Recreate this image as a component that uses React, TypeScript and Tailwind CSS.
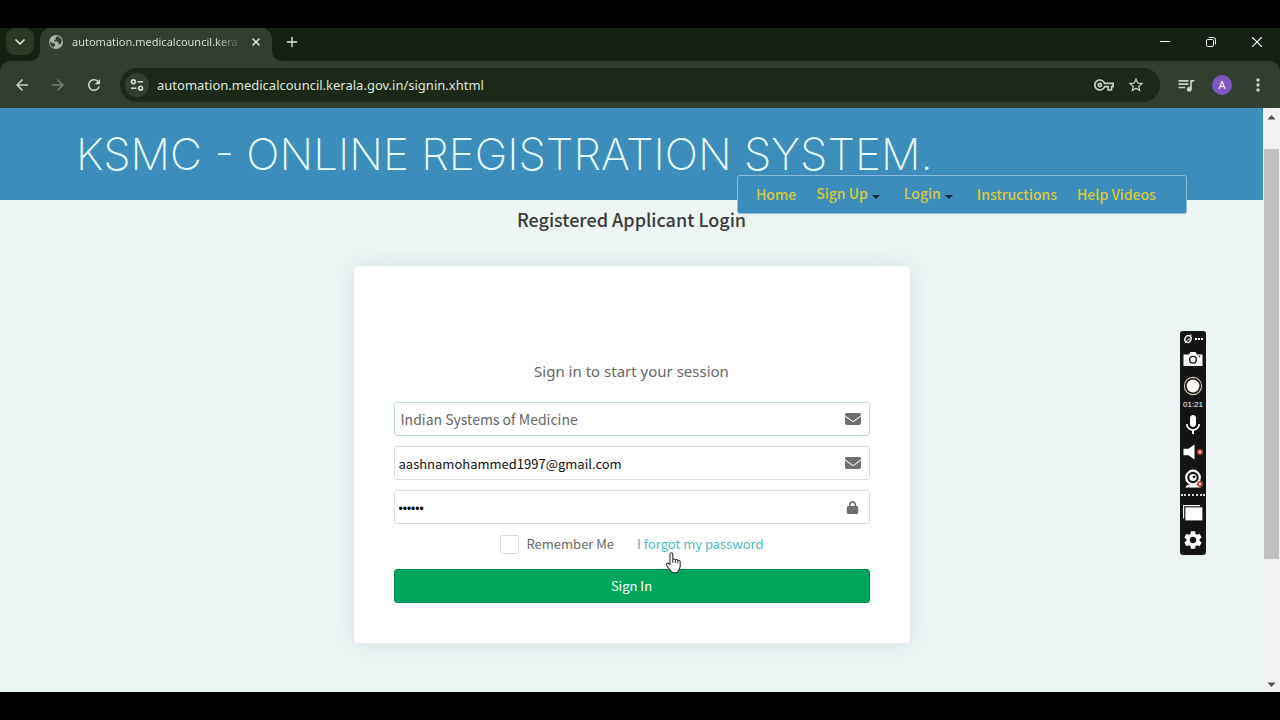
import { ReactNode } from "react";
import { ChevronDown, Plus, X } from "lucide-react";
import {
  MdArrowBack,
  MdArrowForward,
  MdMic,
  MdMoreVert,
  MdOutlineVpnKey,
  MdQueueMusic,
  MdRefresh,
  MdSettings,
  MdStarBorder,
} from "react-icons/md";
import { FaEnvelope, FaLock } from "react-icons/fa6";

function GlobeIcon() {
  return (
    <svg viewBox="0 0 16 16" className="h-4 w-4 shrink-0" aria-hidden="true">
      <circle cx="8" cy="8" r="7" fill="#a9b4ab" />
      <path
        d="M9 2.2 7.6 3.6 8 5 6.4 6.2 6 7.6H9.4l1 1.2.2 1.6 1.6-.2 1.2-1.6.4-2A6 6 0 0 0 9 2.2ZM2.2 7.4l3 2.2h1.6l.4 1.6-1.2 1 .2 1.4A6 6 0 0 1 2.2 7.4Z"
        fill="#35422f"
      />
    </svg>
  );
}

function SiteSettingsIcon() {
  return (
    <svg viewBox="0 0 16 16" className="h-4 w-4" fill="none" stroke="#d3dccf" strokeWidth="1.6" aria-hidden="true">
      <circle cx="4.4" cy="4.8" r="1.9" />
      <path d="M8.4 4.8H14M2 11.2h5.4" />
      <circle cx="11.6" cy="11.2" r="1.9" />
    </svg>
  );
}

function TabStrip() {
  return (
    <div className="flex h-[33px] bg-[#323f2e] text-[#dfe8dc]">
      <div className="flex w-10 justify-center rounded-br-[10px] bg-[#152211]">
        <button aria-label="Search tabs" className="flex h-[27px] w-7 items-center justify-center rounded-[9px] bg-[#2a3826]">
          <ChevronDown className="h-4 w-4" strokeWidth={2.5} />
        </button>
      </div>
      <div className="bg-[#152211]">
        <div className="flex h-full w-[232px] items-center gap-2 rounded-t-[10px] bg-[#323f2e] px-2 pb-[5px]">
          <GlobeIcon />
          <span className="flex-1 whitespace-nowrap bg-linear-to-r from-[#dfe8dc] from-85% to-[#4a5646] bg-clip-text text-[11px] leading-4 text-transparent">
            automation.medicalcouncil.kera
          </span>
          <button aria-label="Close tab" className="flex w-4 justify-center">
            <X className="h-3 w-3" strokeWidth={3} />
          </button>
        </div>
      </div>
      <div className="flex flex-1 rounded-bl-[10px] bg-[#152211]">
        <button aria-label="New tab" className="flex w-10 items-center justify-center pb-[5px]">
          <Plus className="h-4 w-4" />
        </button>
        <div className="ml-auto flex w-[138px] items-center justify-around pb-[6px] text-white">
          <button aria-label="Minimize" className="flex w-8 justify-center">
            <svg viewBox="0 0 10 10" className="h-[10px] w-[10px]" stroke="currentColor">
              <path d="M0 4.5h10" />
            </svg>
          </button>
          <button aria-label="Restore" className="flex w-8 justify-center">
            <svg viewBox="0 0 10 10" className="h-[10px] w-[10px]" fill="none" stroke="currentColor">
              <rect x=".5" y="2.5" width="7" height="7" rx="1.2" />
              <path d="M2.7.6H7.5a2 2 0 0 1 2 2V7.4" />
            </svg>
          </button>
          <button aria-label="Close window" className="flex w-8 justify-center">
            <svg viewBox="0 0 10 10" className="h-[10px] w-[10px]" stroke="currentColor" strokeWidth="1.2">
              <path d="M0 0l10 10M10 0L0 10" />
            </svg>
          </button>
        </div>
      </div>
    </div>
  );
}

function Toolbar() {
  return (
    <div className="bg-[#152211]">
      <div className="flex h-[47px] items-center rounded-t-[10px] bg-[#323f2e] pl-1 text-[#c9d5c4]">
        <button aria-label="Back" className="flex w-9 justify-center">
          <MdArrowBack className="h-[18px] w-[18px]" />
        </button>
        <button aria-label="Forward" className="flex w-9 justify-center text-[#75806f]">
          <MdArrowForward className="h-[18px] w-[18px]" />
        </button>
        <button aria-label="Reload" className="flex w-9 justify-center">
          <MdRefresh className="h-[18px] w-[18px]" />
        </button>
        <div className="ml-2 flex h-[34px] flex-1 items-center rounded-full bg-[#1c2818] pl-[5px] pr-2">
          <button aria-label="Site information" className="flex h-6 w-6 items-center justify-center rounded-full bg-[#323f2e]">
            <SiteSettingsIcon />
          </button>
          <input
            aria-label="Address"
            defaultValue="automation.medicalcouncil.kerala.gov.in/signin.xhtml"
            className="ml-2 min-w-0 flex-1 bg-transparent text-[13px] leading-5 text-[#dfe8dc] outline-none"
          />
          <button aria-label="Passwords" className="flex w-8 justify-center">
            <MdOutlineVpnKey className="h-5 w-5" />
          </button>
          <button aria-label="Bookmark this page" className="flex w-8 justify-center">
            <MdStarBorder className="h-[18px] w-[18px]" />
          </button>
        </div>
        <button aria-label="Media controls" className="ml-2 flex w-9 justify-center">
          <MdQueueMusic className="h-5 w-5" />
        </button>
        <button aria-label="Profile" className="mx-2 h-5 w-5 rounded-full bg-[#7e57c2] text-[11px] leading-5 text-white">
          A
        </button>
        <button aria-label="Menu" className="ml-2 mr-3 flex w-5 justify-center">
          <MdMoreVert className="h-5 w-5" />
        </button>
      </div>
    </div>
  );
}

function Caret() {
  return (
    <svg viewBox="0 0 8 4" className="mt-2 h-1 w-2" fill="#10243a" aria-hidden="true">
      <path d="M0 0h8L4 4z" />
    </svg>
  );
}

function SiteNav() {
  return (
    <nav className="absolute right-[76px] top-[67px] flex h-[39px] w-[450px] items-center whitespace-nowrap rounded-[3px] border border-[#8cbcdc] bg-[#3c8dbc] pb-[2px] pl-[18px] text-sm font-medium leading-5 text-[#d9c83c]">
      <a href="#home">Home</a>
      <a href="#signup" className="ml-5 flex items-center gap-1 pb-[2px]">
        Sign Up <Caret />
      </a>
      <a href="#login" className="ml-6 flex items-center gap-1 pb-[2px]">
        Login <Caret />
      </a>
      <a href="#instructions" className="ml-6">Instructions</a>
      <a href="#videos" className="ml-5">Help Videos</a>
    </nav>
  );
}

function Field({ icon, active, children }: { icon: ReactNode; active?: boolean; children: ReactNode }) {
  return (
    <div
      className={`flex h-[34px] items-center rounded-[3px] border bg-white pr-2 ${
        active ? "border-[#bdd8e0]" : "border-[#dcdde0]"
      }`}
    >
      {children}
      <span className="flex w-4 justify-center text-[#6f6f6f]">{icon}</span>
    </div>
  );
}

function HandCursor() {
  return (
    <svg viewBox="0 0 17 22" className="absolute left-[165px] top-[18px] h-[22px] w-[17px]" aria-hidden="true">
      <path
        d="M5 12.5V2.2C5 .3 7.8.3 7.8 2.2V7.6c.3-1 2.4-.9 2.6.5.5-.9 2.3-.7 2.5.6.6-.7 2.3-.4 2.3 1V14c0 2-1.3 3-1.5 4.4-.3 1.6-1.6 2.4-3.7 2.4-2.8 0-3.8-.8-4.8-2.6-.9-1.7-2.3-2.6-3.4-4.6C.4 11.8 2.2 10.6 3.4 11.6Z"
        fill="#fff"
        stroke="#333"
        strokeWidth="1.1"
        strokeLinejoin="round"
      />
      <path d="M7.8 7.6V11M10.4 8.1V11M12.9 8.8V11.4" stroke="#333" strokeWidth="1" />
    </svg>
  );
}

function LoginCard() {
  return (
    <form className="mx-auto mt-[35px] w-[556px] rounded-[3px] bg-white px-10 pb-10 pt-[95px] shadow-[0_0_30px_rgba(0,60,60,0.09)]">
      <p className="text-center font-['Noto_Sans','Open_Sans',sans-serif] text-[15px] leading-5 text-[#666]">
        Sign in to start your session
      </p>
      <div className="mt-[21px] flex flex-col gap-[10px]">
        <Field active icon={<FaEnvelope className="h-4 w-4" />}>
          <select
            aria-label="Council"
            className="h-full min-w-0 flex-1 appearance-none bg-transparent pl-[6px] text-sm text-[#666] outline-none"
          >
            <option>Indian Systems of Medicine</option>
          </select>
        </Field>
        <Field icon={<FaEnvelope className="h-4 w-4" />}>
          <input
            type="email"
            aria-label="Email"
            defaultValue="aashnamohammed1997@gmail.com"
            className="h-full min-w-0 flex-1 bg-transparent pl-1 text-[13px] text-[#111] outline-none"
          />
        </Field>
        <Field icon={<FaLock className="h-[13px] w-[13px]" />}>
          <input
            type="password"
            aria-label="Password"
            defaultValue="123456"
            className="h-full min-w-0 flex-1 bg-transparent pl-1 pt-[3px] font-['Liberation_Sans',sans-serif] text-xs text-black outline-none"
          />
        </Field>
      </div>
      <div className="relative mx-auto mt-[10px] flex h-5 w-[264px] items-center whitespace-nowrap text-[13px] leading-5">
        <label className="flex items-center gap-2 text-[#666]">
          <input type="checkbox" className="h-[19px] w-[19px] appearance-none rounded-[2px] border border-[#d9d9dc] bg-white" />
          Remember Me
        </label>
        <a href="#forgot" className="ml-auto text-[#4cbcb6]">
          I forgot my password
        </a>
        <HandCursor />
      </div>
      <button
        type="submit"
        className="mt-[15px] h-[34px] w-full rounded-[3px] border border-[#008d4c] bg-[#00a65a] text-[13px] text-white"
      >
        Sign In
      </button>
    </form>
  );
}

function MuteBadge() {
  return (
    <g>
      <circle cx="17" cy="15" r="3" fill="#c9403c" />
      <path d="M15.8 13.8l2.4 2.4M18.2 13.8l-2.4 2.4" stroke="#fff" strokeWidth=".9" />
    </g>
  );
}

function RecorderPanel() {
  return (
    <div className="absolute right-[57px] top-[223px] flex h-[224px] w-[26px] flex-col items-center rounded-[3px] bg-[#141414] text-white">
      <svg viewBox="0 0 26 16" className="h-4 w-[26px]" fill="none" stroke="#fff">
        <ellipse cx="8" cy="8" rx="3" ry="3.4" strokeWidth="1.4" transform="rotate(25 8 8)" />
        <path d="M5 12.2 8 8.4 10 8M9 4.5 11.5 4" strokeWidth="1" />
        <path d="M15 8h8" strokeWidth="1.8" strokeDasharray="2 1" />
      </svg>
      <button aria-label="Screenshot" className="flex h-6 items-center">
        <svg viewBox="0 0 20 16" className="h-4 w-5">
          <path d="M.5 3.5H6L7.5 1h5L14 3.5h5.5V15H.5z" fill="#fff" />
          <circle cx="10" cy="8.8" r="3.4" fill="#fff" stroke="#141414" strokeWidth="1.3" />
          <circle cx="16.6" cy="5.4" r=".8" fill="#141414" />
        </svg>
      </button>
      <button aria-label="Record" className="flex h-[30px] items-center">
        <svg viewBox="0 0 20 20" className="h-5 w-5">
          <circle cx="10" cy="10" r="8.6" fill="none" stroke="#d9c9b8" strokeWidth="1.1" />
          <circle cx="10" cy="10" r="6.4" fill="#fffdf5" />
        </svg>
      </button>
      <span className="font-['Liberation_Sans',sans-serif] text-[8px] leading-[8px]">01:21</span>
      <button aria-label="Microphone" className="mt-[2px] flex h-7 items-center">
        <MdMic className="h-6 w-6" />
      </button>
      <button aria-label="Speaker" className="flex h-[26px] items-center">
        <svg viewBox="0 0 22 18" className="h-[18px] w-[22px]">
          <path d="M1.5 5.8h5L12.5 1.5v15L6.5 12.2h-5z" fill="#fff" />
          <g transform="translate(1 -6)">
            <MuteBadge />
          </g>
        </svg>
      </button>
      <button aria-label="Webcam" className="flex h-7 items-center">
        <svg viewBox="0 0 20 20" className="h-5 w-5">
          <circle cx="10" cy="8.5" r="6.8" fill="none" stroke="#fff" strokeWidth="2.2" />
          <circle cx="10" cy="8.5" r="3.6" fill="#fff" />
          <circle cx="11" cy="7.8" r="1.4" fill="#141414" />
          <path d="M3.5 17.8C5 15.4 15 15.4 16.5 17.8Z" stroke="#fff" strokeWidth="1.4" fill="none" />
          <MuteBadge />
        </svg>
      </button>
      <div className="mt-[1px] w-6 border-t-2 border-dotted border-[#ddd]" />
      <button aria-label="Windows" className="mt-[3px] flex h-7 items-center">
        <svg viewBox="0 0 20 16" className="h-4 w-5">
          <path d="M.6 13.4V.6H17" fill="none" stroke="#fff" strokeWidth="1.2" />
          <rect x="2.4" y="2.4" width="17" height="13" fill="#fff" />
        </svg>
      </button>
      <button aria-label="Settings" className="flex h-[26px] items-center">
        <MdSettings className="h-[22px] w-[22px]" />
      </button>
    </div>
  );
}

function ScrollRail() {
  return (
    <div className="flex w-[17px] flex-col items-center bg-[#f1f1f1]" aria-hidden="true">
      <svg viewBox="0 0 17 17" className="h-[17px] w-[17px]" fill="#505050">
        <path d="M8.5 7 12.5 11.5h-8z" />
      </svg>
      <div className="flex w-full flex-1 flex-col items-center pb-[116px] pt-6">
        <div className="w-[15px] flex-1 bg-[#c1c1c1]" />
      </div>
      <svg viewBox="0 0 17 17" className="h-[17px] w-[17px]" fill="#505050">
        <path d="M8.5 12 4.5 7.5h8z" />
      </svg>
    </div>
  );
}

export default function App() {
  return (
    <div className="flex min-h-screen flex-col bg-black py-7 font-['Noto_Sans','Open_Sans',sans-serif]">
      <TabStrip />
      <Toolbar />
      <div className="flex flex-1 font-['Noto_Sans_CJK_SC',sans-serif]">
        <main className="relative flex-1 bg-[#ecf4f4]">
          <header className="h-[92px] bg-[#3c8dbc] pl-[76px] pt-5">
            <h1 className="whitespace-nowrap font-['Inter','Lato',sans-serif] text-[44px] font-extralight leading-[52px] text-[#ecffff]">
              KSMC - ONLINE REGISTRATION SYSTEM.
            </h1>
          </header>
          <SiteNav />
          <h2 className="mt-[7px] text-center text-lg font-medium leading-6 text-[#3b3b3b]">Registered Applicant Login</h2>
          <LoginCard />
          <RecorderPanel />
        </main>
        <ScrollRail />
      </div>
    </div>
  );
}
